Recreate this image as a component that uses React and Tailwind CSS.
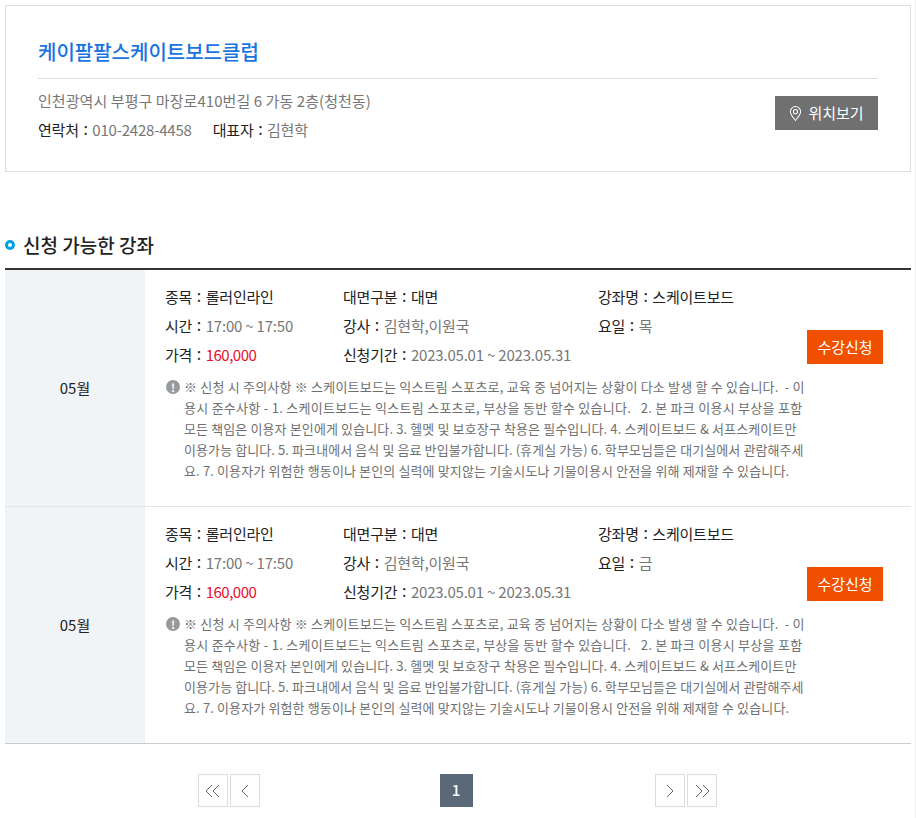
import React from "react";

const F = { fontFamily: '"Noto Sans CJK KR","Noto Sans",sans-serif' };

const C = () => <span className="inline-block w-[13.5px] text-center text-[16px] leading-none relative top-[-1px]">:</span>;

function Course({ day, border }) {
  return (
    <div className={`flex h-[237px] border-b ${border}`}>
      <div className="w-[140px] shrink-0 bg-[#f0f4f7] flex items-center justify-center text-[15px] text-[#222]">05월</div>
      <div className="flex-1 flex items-center min-w-0">
        <div className="w-[642px] ml-5 shrink-0 pb-[10px]">
          <div className="grid grid-cols-[178px_255px_1fr] gap-y-[8px] text-[15px] leading-[21px] tracking-[-0.2px] text-[#222]">
            <div>종목<C />롤러인라인</div>
            <div>대면구분<C />대면</div>
            <div>강좌명<C />스케이트보드</div>
            <div>시간<C /><span className="text-[#777]">17:00 ~ 17:50</span></div>
            <div>강사<C /><span className="text-[#777]">김현학,이원국</span></div>
            <div>요일<C /><span className="text-[#777]">{day}</span></div>
            <div>가격<C /><span className="text-[#e8102a] tracking-[-0.5px]">160,000</span></div>
            <div className="col-span-2">신청기간<C /><span className="text-[#777]">2023.05.01 ~ 2023.05.31</span></div>
          </div>
          <div className="relative mt-[11px] pl-[19px] text-[13px] leading-[21px] text-[#707070] whitespace-nowrap">
            <span className="absolute left-[1px] top-[4px] w-[14px] h-[14px] rounded-full bg-[#999] text-white text-[11px] font-bold leading-[14px] text-center">!</span>
            <div className="tracking-[0.2px]">※ 신청 시 주의사항 ※ 스케이트보드는 익스트림 스포츠로, 교육 중 넘어지는 상황이 다소 발생 할 수 있습니다. &nbsp;- 이</div>
            <div className="tracking-[0.27px]">용시 준수사항 - 1. 스케이트보드는 익스트림 스포츠로, 부상을 동반 할수 있습니다. &nbsp;&nbsp;2. 본 파크 이용시 부상을 포함</div>
            <div className="tracking-[0.12px]">모든 책임은 이용자 본인에게 있습니다. 3. 헬멧 및 보호장구 착용은 필수입니다. 4. 스케이트보드 &amp; 서프스케이트만</div>
            <div className="tracking-[0.09px]">이용가능 합니다. 5. 파크내에서 음식 및 음료 반입불가합니다. (휴게실 가능) 6. 학부모님들은 대기실에서 관람해주세</div>
            <div className="tracking-[0.13px]">요. 7. 이용자가 위험한 행동이나 본인의 실력에 맞지않는 기술시도나 기물이용시 안전을 위해 제재할 수 있습니다.</div>
          </div>
        </div>
        <button className="w-[76px] h-[34px] mb-[82px] bg-[#f05000] text-white text-[15px] shrink-0">수강신청</button>
      </div>
    </div>
  );
}

function Chev({ dbl, right }) {
  return (
    <svg width="20" height="14" viewBox="0 0 20 14" fill="none" stroke="#666" strokeWidth="1">
      <g transform={right ? "translate(20,0) scale(-1,1)" : undefined}>
        {dbl ? (
          <>
            <path d="M9 1 3 7l6 6" />
            <path d="M16 1 10 7l6 6" />
          </>
        ) : (
          <path d="M13 1 7 7l6 6" />
        )}
      </g>
    </svg>
  );
}

const PageBtn = ({ dbl, right }) => (
  <div className="w-[30px] h-[33px] border border-[#dcdcdc] flex items-center justify-center">
    <Chev dbl={dbl} right={right} />
  </div>
);

export default function App() {
  return (
    <div className="w-[916px] h-[818px] overflow-hidden bg-white pt-[5px] pl-[5px] border-r border-[#f2f2f2]" style={F}>
      <div className="w-[906px]">
        <section className="h-[167px] border border-[#ddd] px-8 pt-[29px]">
          <h1 className="text-[20px] leading-[34px] font-medium text-[#1a73e0] pb-[9px] border-b border-[#ddd]">케이팔팔스케이트보드클럽</h1>
          <div className="flex justify-between">
            <div className="pt-[9px] text-[15px] leading-[26px] text-[#777]">
              <div className="tracking-[0.07px]">인천광역시 부평구 마장로410번길 6 가동 2층(청천동)</div>
              <div className="mt-[3px] text-[#222] tracking-[-0.2px]">
                연락처<C /><span className="text-[#777]">010-2428-4458</span>
                <span className="ml-[21px]">대표자<C /><span className="text-[#777]">김현학</span></span>
              </div>
            </div>
            <button className="mt-[17px] w-[103px] h-[34px] bg-[#707070] text-white text-[15px] flex items-center justify-center gap-[6px]">
              <svg width="13" height="17" viewBox="0 0 14 17" fill="none" stroke="#fff" strokeWidth="1.1">
                <path d="M7 16C4 12 1.500 9.500 1.500 6.500a5.500 5.500 0 0 1 11 0C12.500 9.500 10 12 7 16Z" />
                <circle cx="7" cy="6.500" r="2.200" />
              </svg>
              위치보기
            </button>
          </div>
        </section>

        <h2 className="mt-[58px] flex items-center gap-2 h-[30px] text-[19px] font-medium text-[#222]">
          <span className="w-[10px] h-[10px] rounded-full border-[3px] border-[#00a0e0]" />
          신청 가능한 강좌
        </h2>

        <div className="mt-[8px] border-t-2 border-[#333]">
          <Course day="목" border="border-[#e5e5e5]" />
          <Course day="금" border="border-[#ccc]" />
        </div>

        <nav className="mt-[30px] flex justify-center relative w-[906px]">
          <div className="absolute left-[193px] flex gap-[2px]"><PageBtn dbl /><PageBtn /></div>
          <div className="w-[33px] h-[33px] bg-[#5a6878] text-white text-[15px] font-medium flex items-center justify-center ml-[-4px]">1</div>
          <div className="absolute left-[650px] flex gap-[2px]"><PageBtn right /><PageBtn dbl right /></div>
        </nav>
      </div>
    </div>
  );
}
